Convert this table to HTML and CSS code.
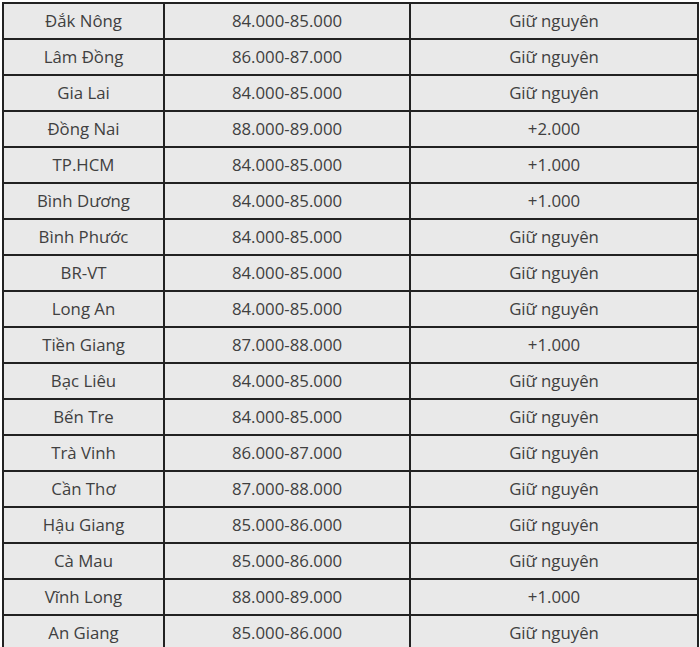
FILE: index.html
```html
<!DOCTYPE html>
<html lang="vi">
<head>
<meta charset="utf-8">
<title>Giá cà phê</title>
<link rel="stylesheet" href="styles.css">
</head>
<body>
<table class="price-table">
  <colgroup>
    <col class="c1">
    <col class="c2">
    <col class="c3">
  </colgroup>
  <tbody>
    <tr><td>Đắk Nông</td><td>84.000-85.000</td><td>Giữ nguyên</td></tr>
    <tr><td>Lâm Đồng</td><td>86.000-87.000</td><td>Giữ nguyên</td></tr>
    <tr><td>Gia Lai</td><td>84.000-85.000</td><td>Giữ nguyên</td></tr>
    <tr><td>Đồng Nai</td><td>88.000-89.000</td><td>+2.000</td></tr>
    <tr><td>TP.HCM</td><td>84.000-85.000</td><td>+1.000</td></tr>
    <tr><td>Bình Dương</td><td>84.000-85.000</td><td>+1.000</td></tr>
    <tr><td>Bình Phước</td><td>84.000-85.000</td><td>Giữ nguyên</td></tr>
    <tr><td>BR-VT</td><td>84.000-85.000</td><td>Giữ nguyên</td></tr>
    <tr><td>Long An</td><td>84.000-85.000</td><td>Giữ nguyên</td></tr>
    <tr><td>Tiền Giang</td><td>87.000-88.000</td><td>+1.000</td></tr>
    <tr><td>Bạc Liêu</td><td>84.000-85.000</td><td>Giữ nguyên</td></tr>
    <tr><td>Bến Tre</td><td>84.000-85.000</td><td>Giữ nguyên</td></tr>
    <tr><td>Trà Vinh</td><td>86.000-87.000</td><td>Giữ nguyên</td></tr>
    <tr><td>Cần Thơ</td><td>87.000-88.000</td><td>Giữ nguyên</td></tr>
    <tr><td>Hậu Giang</td><td>85.000-86.000</td><td>Giữ nguyên</td></tr>
    <tr><td>Cà Mau</td><td>85.000-86.000</td><td>Giữ nguyên</td></tr>
    <tr><td>Vĩnh Long</td><td>88.000-89.000</td><td>+1.000</td></tr>
    <tr><td>An Giang</td><td>85.000-86.000</td><td>Giữ nguyên</td></tr>
  </tbody>
</table>
</body>
</html>
```
FILE: styles.css
```css
html {
  overflow: hidden;
  background: #ffffff;
}
body {
  margin: 0;
  padding: 2px 0 0 2px;
  font-family: "Open Sans", "Noto Sans", sans-serif;
}
.price-table {
  border-collapse: collapse;
  table-layout: fixed;
  width: 695px;
  background: #e9e9e9;
  color: #404040;
  font-size: 16.8px;
}
.c1 { width: 161px; }
.c2 { width: 246px; }
.c3 { width: 288px; }
.price-table td {
  border: 2px solid #222222;
  height: 34px;
  padding: 0;
  text-align: center;
  vertical-align: middle;
  line-height: 20px;
}
```
